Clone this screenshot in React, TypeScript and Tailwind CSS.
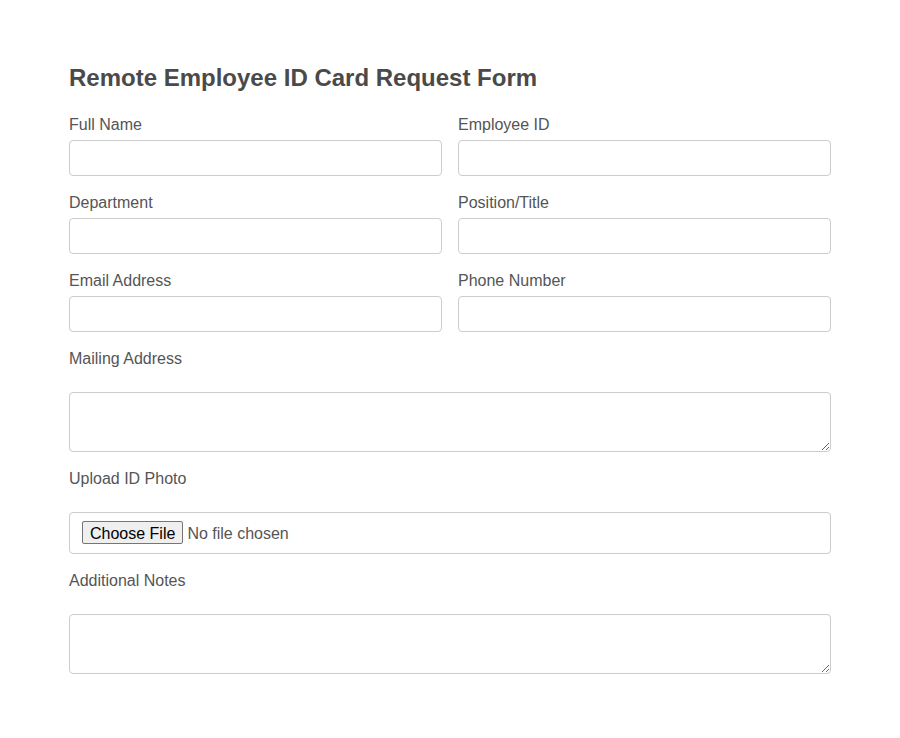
import React from "react";

function Field({ label, children, wide }: { label: string; children: React.ReactNode; wide?: boolean }) {
  return (
    <div className={wide ? "col-span-2 flex flex-col" : "flex flex-col"}>
      <label className={`block text-[16px] leading-[18px] text-[#555] ${wide ? "mb-[24px]" : "mb-[6px]"}`}>{label}</label>
      {children}
    </div>
  );
}

const inputCls = "block w-full h-[36px] px-2 border border-[#ccc] rounded-[4px] bg-white text-[16px] outline-none";
const areaCls = "block w-full h-[60px] px-2 py-2 border border-[#ccc] rounded-[4px] bg-white text-[16px] outline-none";

export default function App() {
  return (
    <div className="min-h-screen bg-white font-['Liberation_Sans',Arial,sans-serif]">
      <div className="w-[762px] mx-auto pt-[64px] pb-10">
        <h2 className="text-[24px] leading-[28px] font-bold text-[#4a4a4a] mb-[24px]">
          Remote Employee ID Card Request Form
        </h2>
        <form className="grid grid-cols-2 gap-x-4 gap-y-[18px]">
          <Field label="Full Name">
            <input type="text" className={inputCls} />
          </Field>
          <Field label="Employee ID">
            <input type="text" className={inputCls} />
          </Field>
          <Field label="Department">
            <input type="text" className={inputCls} />
          </Field>
          <Field label="Position/Title">
            <input type="text" className={inputCls} />
          </Field>
          <Field label="Email Address">
            <input type="email" className={inputCls} />
          </Field>
          <Field label="Phone Number">
            <input type="tel" className={inputCls} />
          </Field>
          <Field label="Mailing Address" wide>
            <textarea className={areaCls} />
          </Field>
          <Field label="Upload ID Photo" wide>
            <input
              type="file"
              className="block w-full h-[42px] pl-3 pr-2 py-2 border border-[#ccc] rounded-[4px] bg-white text-[16px] leading-[23px] text-[#555] file:mr-1 file:h-[23px] file:px-[7px] file:border file:border-[#767676] file:rounded-[2px] file:bg-[#efefef] file:text-black file:text-[16px]"
            />
          </Field>
          <Field label="Additional Notes" wide>
            <textarea className={areaCls} />
          </Field>
        </form>
      </div>
    </div>
  );
}
